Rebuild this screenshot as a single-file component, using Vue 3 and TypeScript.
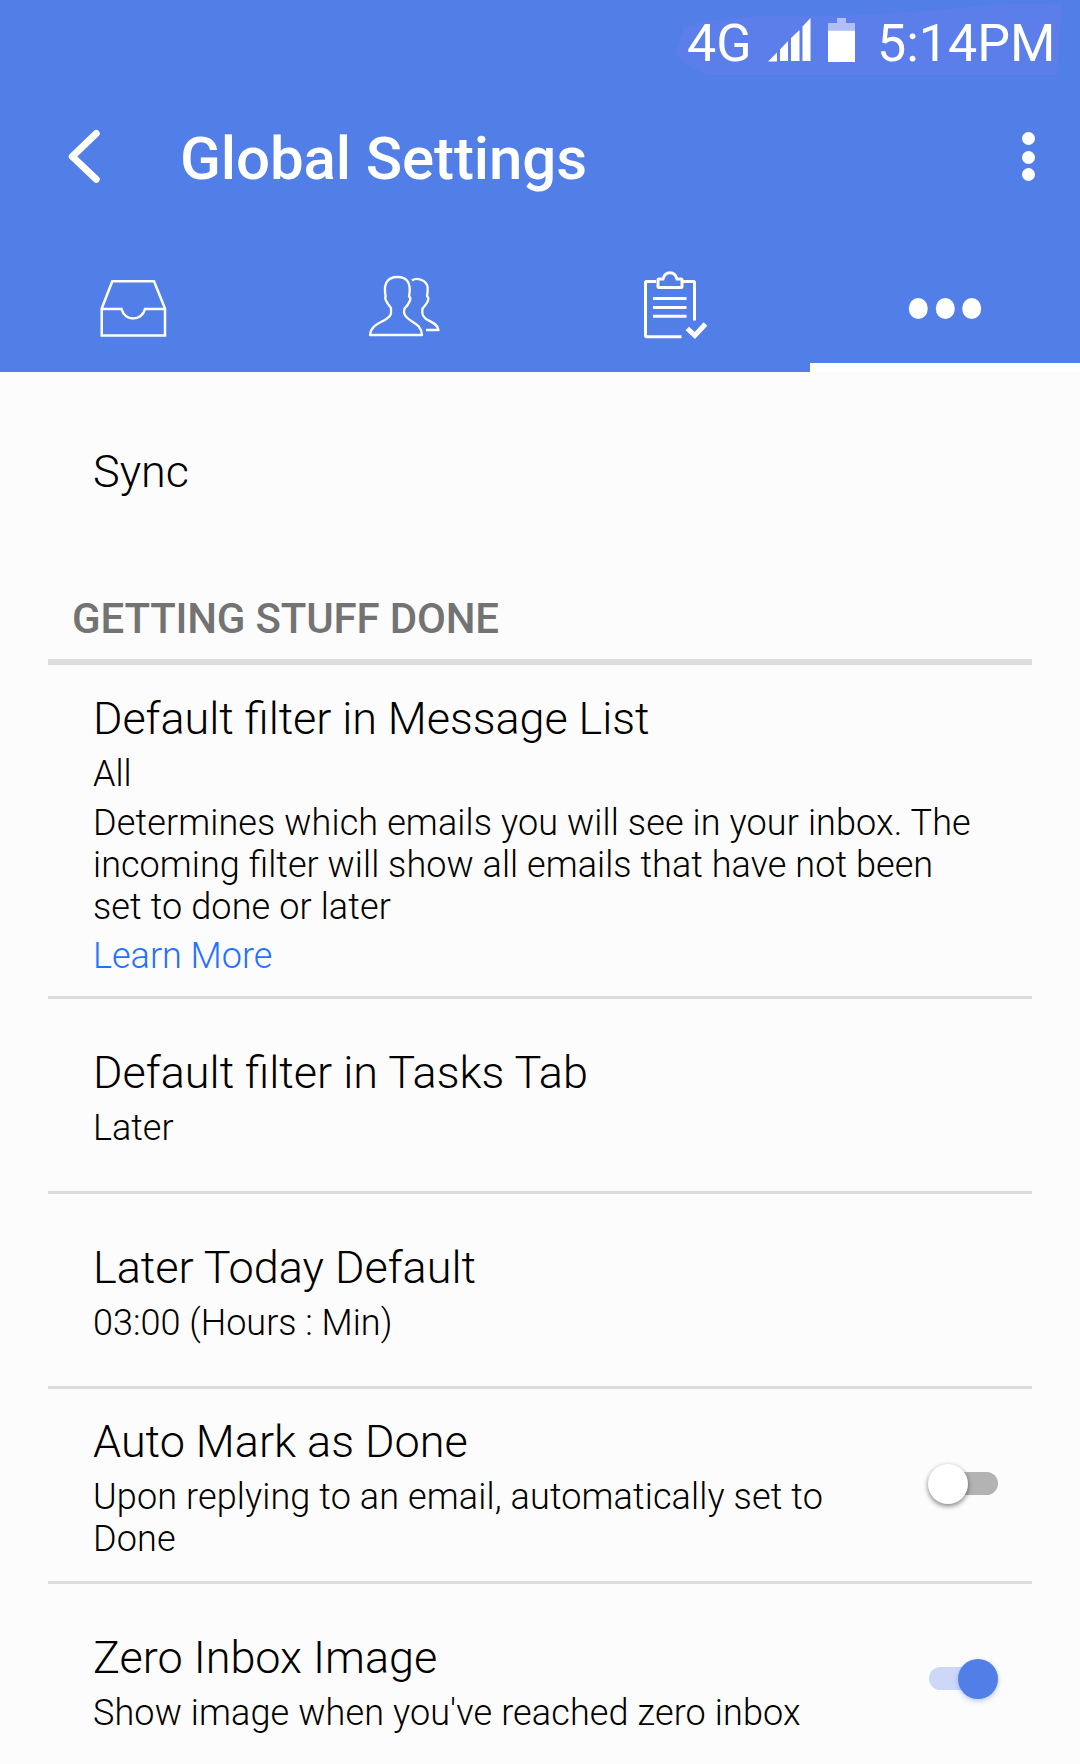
<script setup lang="ts">
interface Setting {
  title: string
  lines: string[]
  help?: string[]
  link?: string
  on?: boolean
  kind: string
}

const settings: Setting[] = [
  {
    title: 'Default filter in Message List',
    lines: ['All'],
    help: [
      'Determines which emails you will see in your inbox. The',
      'incoming filter will show all emails that have not been',
      'set to done or later',
    ],
    link: 'Learn More',
    kind: 'tall',
  },
  { title: 'Default filter in Tasks Tab', lines: ['Later'], kind: 'plain' },
  { title: 'Later Today Default', lines: ['03:00 (Hours : Min)'], kind: 'plain' },
  {
    title: 'Auto Mark as Done',
    lines: ['Upon replying to an email, automatically set to', 'Done'],
    on: false,
    kind: 'toggle',
  },
  {
    title: 'Zero Inbox Image',
    lines: ["Show image when you've reached zero inbox"],
    on: true,
    kind: 'toggle',
  },
]
</script>

<template>
  <div class="screen">
    <header class="header">
      <div class="status">
        <svg class="glow" width="400" height="80" viewBox="0 0 400 80">
          <path d="M0 54L9 26L40 20L82 16L190 15L270 9L325 4L385 3L387 5L382 75H30L8 62Z" fill="#5b7eea" />
        </svg>
        <span class="network">4G</span>
        <svg class="signal" width="43" height="44" viewBox="0 0 43 44" fill="#fff">
          <path d="M0 43.500L9 34.500V43.500ZM12 43V31.500L20 23V43ZM23 43V20L31.500 12V43ZM34.500 43V8.500L42.500 0V43Z" />
        </svg>
        <svg class="battery" width="27" height="44" viewBox="0 0 27 44">
          <path d="M9 0H18V5H27V12.500H0V5H9Z" fill="#b0c0f5" />
          <path d="M0 12.500H27V44H0Z" fill="#fff" />
        </svg>
        <span class="clock">5:14PM</span>
      </div>

      <div class="bar">
        <svg class="back" width="32" height="58" viewBox="0 0 32 58">
          <path d="M28.200 4.500L4.300 27.500L28.200 50.300" fill="none" stroke="#fff" stroke-width="7" stroke-linecap="round" stroke-linejoin="round" />
        </svg>
        <h1>Global Settings</h1>
        <svg class="more" width="14" height="50" viewBox="0 0 14 50" fill="#fff">
          <circle cx="6.500" cy="6.500" r="6.500" />
          <circle cx="6.500" cy="25.500" r="6.500" />
          <circle cx="6.500" cy="42.500" r="6.500" />
        </svg>
      </div>

      <nav class="tabs">
        <div class="tab">
          <svg width="110" height="90" viewBox="0 0 110 90">
            <path d="M21.700 48.500L32.300 21.300H74L85 48.500V75.500H21.700ZM21.700 49H41.500C45 62 62 61 65 49H85" fill="none" stroke="#fff" stroke-width="2.500" />
          </svg>
        </div>
        <div class="tab">
          <svg width="110" height="90" viewBox="0 0 110 90">
            <g fill="none" stroke="#fff" stroke-width="2.300" stroke-linejoin="round">
              <path d="M20 75C20.500 65 31 63 37 58.500C42 55 41 53 41 48C38.500 45 37 43 36 40.500Q34.500 37.500 35.700 36.500C33 24 37 17 47.500 17S61.500 24 59 36.500Q61 37.500 60 40.500C59 43 57.500 46 54.500 48.500C53.500 53 54 55 58 58.500C63 63 71 64 72 75Z" />
              <path d="M62 20.500C66 17.500 74 19 77 25C78.500 28 77.500 32 77 36.500Q79 37 78 40.500C77 44 74.500 46 72.500 48.500C72 53 72 56 76 59C81 62 88 64 88.500 70H76" />
            </g>
          </svg>
        </div>
        <div class="tab">
          <svg width="110" height="90" viewBox="0 0 110 90">
            <g fill="none" stroke="#fff" transform="translate(-10 0)">
              <path d="M46 21.500H36.500Q35.500 21.500 35.500 22.500V75.500Q35.500 76.700 36.500 76.700H71.500M72 21.500H83.500Q84.500 21.500 84.500 22.500V60.500" stroke-width="3" />
              <path d="M49 19H53C55 10.500 65 10.500 67 19H71Q72 19 72 20V26.500Q72 27.500 71 27.500H49Q48 27.500 48 26.500V20Q48 19 49 19Z" stroke-width="3" />
              <path d="M43 38.500H76.500M43 47.500H76.500M43 56.300H76.500" stroke-width="2.900" />
              <path d="M77.300 68.500L84.800 75.500L95.500 64" stroke-width="5" />
            </g>
          </svg>
        </div>
        <div class="tab active">
          <svg width="110" height="90" viewBox="0 0 110 90" fill="#fff">
            <ellipse cx="28.300" cy="48.500" rx="9.500" ry="10.500" />
            <ellipse cx="55.300" cy="48.500" rx="9.500" ry="10.500" />
            <ellipse cx="81.700" cy="48.500" rx="9.500" ry="10.500" />
          </svg>
        </div>
      </nav>
    </header>

    <main>
      <div class="sync">Sync</div>
      <h2>GETTING STUFF DONE</h2>
      <section v-for="s in settings" :key="s.title" class="row" :class="s.kind">
        <div class="copy">
          <h3>{{ s.title }}</h3>
          <p><span v-for="l in s.lines" :key="l">{{ l }}</span></p>
          <p v-if="s.help" class="help"><span v-for="l in s.help" :key="l">{{ l }}</span></p>
          <a v-if="s.link">{{ s.link }}</a>
        </div>
        <div v-if="s.on !== undefined" class="switch" :class="{ on: s.on }">
          <div class="track"></div>
          <div class="thumb"></div>
        </div>
      </section>
    </main>
  </div>
</template>

<style>
body {
  margin: 0;
  overflow: hidden;
}
</style>

<style scoped>
.screen {
  width: 1080px;
  height: 1764px;
  overflow: hidden;
  background: #fcfcfc;
  color: #000;
  font-family: Roboto, sans-serif;
  font-weight: 300;
}
.header {
  height: 372px;
  background: #527ee7;
  color: #fff;
}
.status {
  position: relative;
  height: 84px;
  display: flex;
  align-items: flex-start;
  box-sizing: border-box;
  padding-left: 687px;
  font-size: 52px;
  font-weight: 400;
  line-height: 60px;
}
.glow {
  position: absolute;
  left: 675px;
  top: 0;
}
.status > *:not(.glow) {
  position: relative;
  flex: none;
}
.network {
  width: 81px;
  padding-top: 14px;
}
.signal {
  margin-top: 18px;
}
.battery {
  margin: 18px 0 0 17px;
}
.clock {
  margin-left: 22px;
  padding-top: 14px;
}
.bar {
  height: 146px;
  display: flex;
  align-items: flex-start;
}
.back {
  margin: 45px 0 0 68px;
}
h1 {
  margin: 39px 0 0 80px;
  width: 842px;
  font-size: 60px;
  line-height: 72px;
  font-weight: 500;
  letter-spacing: -0.1px;
}
.more {
  flex: none;
  margin-top: 48px;
}
.tabs {
  height: 142px;
  display: flex;
}
.tab {
  width: 270px;
  height: 142px;
  box-sizing: border-box;
  padding: 30px 0 0 80px;
}
.active {
  border-bottom: 9px solid #fff;
}
.sync {
  height: 204px;
  box-sizing: border-box;
  padding: 73px 0 0 93px;
  font-size: 45px;
  line-height: 53px;
}
h2 {
  height: 89px;
  box-sizing: border-box;
  margin: 0 48px;
  padding: 18px 0 0 24px;
  border-bottom: 6px solid #dcdcdc;
  color: #737373;
  font-size: 42px;
  line-height: 50px;
  font-weight: 500;
  letter-spacing: -0.18px;
}
.row {
  display: flex;
  align-items: center;
  justify-content: space-between;
  box-sizing: border-box;
  height: 195px;
  margin: 0 48px;
  padding: 0 32px 0 45px;
  border-bottom: 3px solid #dcdcdc;
}
.copy {
  padding-top: 5px;
}
.tall {
  height: 334px;
}
.tall .copy {
  padding-top: 8px;
}
h3 {
  margin: 0 0 8px;
  font-size: 45px;
  line-height: 53px;
  font-weight: 300;
}
.tall h3 {
  letter-spacing: -0.07px;
  font-feature-settings: 'liga' 1;
}
p {
  margin: 0;
}
p,
a {
  font-size: 36px;
  line-height: 42px;
  white-space: nowrap;
}
p span,
a {
  display: block;
}
.help span,
.toggle p {
  letter-spacing: 0.12px;
  font-feature-settings: 'liga' 1;
}
.help span:nth-child(2) {
  letter-spacing: 0.06px;
}
.help,
a {
  margin-top: 7px;
}
a {
  color: #2470ff;
}
.switch {
  position: relative;
  flex: none;
  width: 72px;
  height: 40px;
  margin-bottom: 3px;
  display: flex;
  align-items: center;
}
.track {
  width: 69px;
  height: 23px;
  margin-left: 1px;
  border-radius: 12px;
  background: #b3b3b3;
}
.thumb {
  position: absolute;
  left: 0;
  top: 0;
  width: 40px;
  height: 40px;
  border-radius: 50%;
  background: #fff;
  box-shadow: 0 2px 5px rgba(0, 0, 0, 0.5);
}
.on .track {
  background: #ccd8f6;
}
.on .thumb {
  left: 30px;
  background: #527ee7;
  box-shadow: 0 2px 5px rgba(82, 126, 231, 0.4);
}
</style>
